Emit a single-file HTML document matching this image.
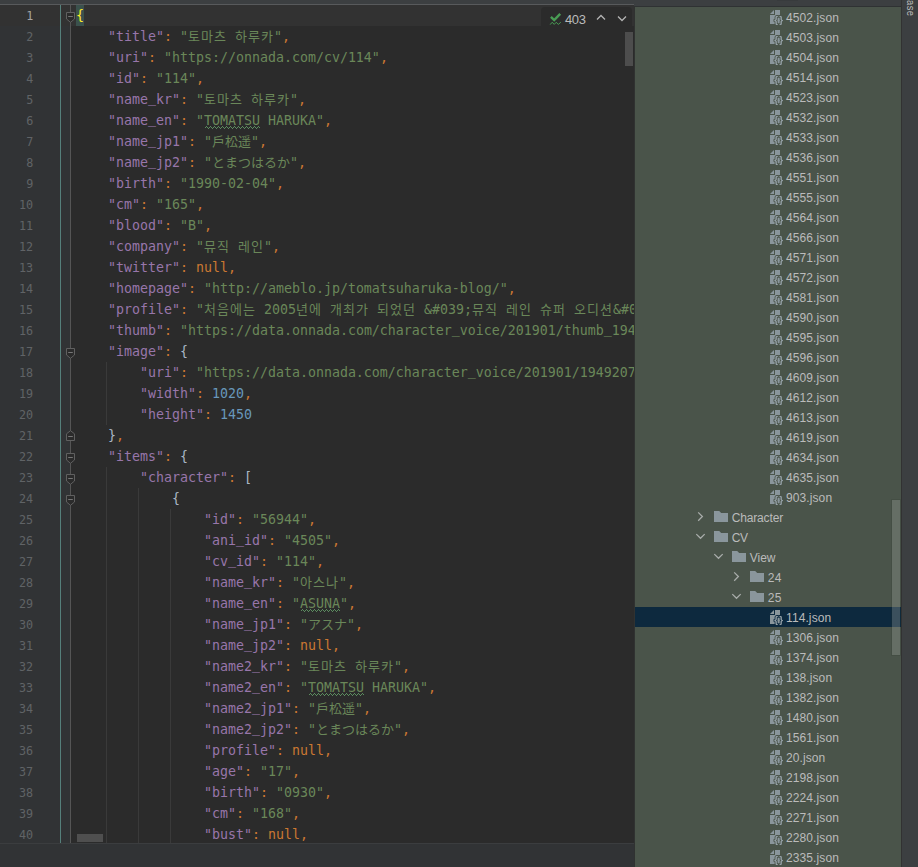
<!DOCTYPE html>
<html lang="ko">
<head>
<meta charset="utf-8">
<title>114.json</title>
<style>
html,body{margin:0;padding:0;}
body{width:918px;height:867px;overflow:hidden;background:#2b2b2b;position:relative;font-family:"Liberation Sans", "Noto Sans CJK KR", sans-serif;}
#app{position:absolute;left:0;top:0;width:918px;height:867px;overflow:hidden;background:#2b2b2b;}
.abs{position:absolute;}
#topstrip{left:0;top:0;width:634px;height:4px;background:#3c3f41;}
#topline{left:0;top:4px;width:634px;height:1px;background:#585a5c;}
#editor{left:0;top:5px;width:634px;height:838px;overflow:hidden;background:#2b2b2b;}
#gutter{left:0;top:0;width:70px;height:838px;background:#313335;}
#curline{left:0;top:0;width:634px;height:21px;background:#323232;}
#teal{left:60px;top:0;width:1px;height:838px;background:#55807b;}
#gsep{left:70px;top:0;width:1px;height:838px;background:#555555;}
#nums{left:0;top:0.8px;width:33.2px;transform:scaleX(0.955);transform-origin:100% 0;}
.no{height:21px;text-align:right;color:#606366;font:12.27px/21px "DejaVu Sans Mono", "Liberation Mono", "Noto Sans CJK KR", monospace;}
.no.cur{color:#a4a3a3;}
#code{left:76px;top:0;width:558px;overflow:hidden;}
.ln{height:21px;line-height:21px;white-space:pre;color:#a9b7c6;font:13.29px/21px "DejaVu Sans Mono", "Liberation Mono", "Noto Sans CJK KR", monospace;}
.k{color:#9876aa}.s{color:#6a8759}.c{color:#cc7832}.n{color:#6897bb}
.u{color:#6a8759;}
.us{position:relative;top:-2.5px;}
.wave{position:absolute;}
.b{color:#ffef28;background:#3b514d;display:inline-block;height:21px;}
.kr{font-family:"Liberation Mono","Noto Sans CJK KR","NanumGothic",sans-serif;font-size:13px;letter-spacing:1.04px;line-height:0;}
.jp{font-family:"Liberation Mono","Noto Sans CJK JP","IPAGothic",sans-serif;font-size:13px;line-height:0;}
.guide{position:absolute;width:1px;background:#3a3a3a;}
.fold{position:absolute;left:66px;}
#widget{left:541px;top:7px;width:91px;height:20px;background:#2b2b2b;border-radius:4px 4px 0 0;}
#w403{left:24px;top:5px;font:13px/16px "Liberation Sans", "Noto Sans CJK KR", sans-serif;color:#bbbbbb;letter-spacing:-0.4px;}
#vthumb{left:625px;top:32px;width:8px;height:34px;background:#4d4d4d;}
#hthumb{left:77px;top:834px;width:26px;height:8px;background:#4f4f4f;}
#botline{left:0;top:843px;width:634px;height:1px;background:#3b3d3f;}
#bot{left:0;top:844px;width:634px;height:23px;background:#313335;}
#edge{left:634px;top:5px;width:1px;height:862px;background:#303231;}
#rtop{left:634px;top:0;width:284px;height:6px;background:#3c3f41;}
#rline{left:635px;top:6px;width:266px;height:1px;background:#2f3233;}
#tree{left:635px;top:0;width:266px;height:867px;overflow:hidden;}
#treebg{left:0;top:7px;width:266px;height:860px;background:#4a544a;}
.row{position:absolute;left:0;width:266px;height:20px;}
.row.sel{background:#0d293e;}
.fi{position:absolute;display:block;line-height:0;}
.ico,.chev{display:block;}
.lbl{position:absolute;top:1px;height:20px;font:12px/20px "Liberation Sans", "Noto Sans CJK KR", sans-serif;color:#bbbbbb;white-space:pre;letter-spacing:0.1px;}
.br{font-family:"Liberation Sans",sans-serif;font-weight:bold;fill:#98a4ab;stroke:#4a544a;stroke-width:1.8px;paint-order:stroke;}
.ico{will-change:transform;}
.sel .br{stroke:#0d293e;}
#tthumb{left:257px;top:500px;width:8px;height:155px;background:rgba(166,172,166,0.30);box-shadow:0 0 0 1px rgba(40,48,40,0.16);}
#stripe{left:901px;top:0;width:17px;height:867px;background:#3c3f41;border-left:1px solid #323232;box-sizing:border-box;}
#vtext{left:15.7px;top:-27.2px;letter-spacing:0.5px;transform-origin:0 0;transform:rotate(90deg) scaleX(0.85);font:11px/14px "Liberation Sans", "Noto Sans CJK KR", sans-serif;color:#bbbbbb;white-space:pre;}
</style>
</head>
<body>
<div id="app">
<div id="topstrip" class="abs"></div>
<div id="topline" class="abs"></div>
<div id="editor" class="abs">
<div id="gutter" class="abs"></div>
<div id="curline" class="abs"></div>
<div id="teal" class="abs"></div>
<div id="gsep" class="abs"></div>
<div id="guides" class="abs" style="left:0;top:-5px">
<div class="guide" style="left:106px;top:362px;height:63px"></div>
<div class="guide" style="left:106px;top:467px;height:378px"></div>
<div class="guide" style="left:138px;top:488px;height:357px"></div>
<div class="guide" style="left:170px;top:509px;height:336px"></div>
</div>
<div id="nums" class="abs">
<div class="no cur">1</div>
<div class="no">2</div>
<div class="no">3</div>
<div class="no">4</div>
<div class="no">5</div>
<div class="no">6</div>
<div class="no">7</div>
<div class="no">8</div>
<div class="no">9</div>
<div class="no">10</div>
<div class="no">11</div>
<div class="no">12</div>
<div class="no">13</div>
<div class="no">14</div>
<div class="no">15</div>
<div class="no">16</div>
<div class="no">17</div>
<div class="no">18</div>
<div class="no">19</div>
<div class="no">20</div>
<div class="no">21</div>
<div class="no">22</div>
<div class="no">23</div>
<div class="no">24</div>
<div class="no">25</div>
<div class="no">26</div>
<div class="no">27</div>
<div class="no">28</div>
<div class="no">29</div>
<div class="no">30</div>
<div class="no">31</div>
<div class="no">32</div>
<div class="no">33</div>
<div class="no">34</div>
<div class="no">35</div>
<div class="no">36</div>
<div class="no">37</div>
<div class="no">38</div>
<div class="no">39</div>
<div class="no">40</div>
</div>
<div id="code" class="abs">
<div class="ln"><span class="b">{</span></div>
<div class="ln">    <span class="k">"title"</span><span class="c">:</span> <span class="s">"<span class="kr">토마츠</span> <span class="kr">하루카</span>"</span><span class="c">,</span></div>
<div class="ln">    <span class="k">"uri"</span><span class="c">:</span> <span class="s">"https://onnada.com/cv/114"</span><span class="c">,</span></div>
<div class="ln">    <span class="k">"id"</span><span class="c">:</span> <span class="s">"114"</span><span class="c">,</span></div>
<div class="ln">    <span class="k">"name<span class="us">_</span>kr"</span><span class="c">:</span> <span class="s">"<span class="kr">토마츠</span> <span class="kr">하루카</span>"</span><span class="c">,</span></div>
<div class="ln">    <span class="k">"name<span class="us">_</span>en"</span><span class="c">:</span> <span class="s">"</span><span class="u">TOMATSU</span><span class="s"> HARUKA"</span><span class="c">,</span></div>
<div class="ln">    <span class="k">"name<span class="us">_</span>jp1"</span><span class="c">:</span> <span class="s">"<span class="jp">戸松遥</span>"</span><span class="c">,</span></div>
<div class="ln">    <span class="k">"name<span class="us">_</span>jp2"</span><span class="c">:</span> <span class="s">"<span class="jp">とまつはるか</span>"</span><span class="c">,</span></div>
<div class="ln">    <span class="k">"birth"</span><span class="c">:</span> <span class="s">"1990-02-04"</span><span class="c">,</span></div>
<div class="ln">    <span class="k">"cm"</span><span class="c">:</span> <span class="s">"165"</span><span class="c">,</span></div>
<div class="ln">    <span class="k">"blood"</span><span class="c">:</span> <span class="s">"B"</span><span class="c">,</span></div>
<div class="ln">    <span class="k">"company"</span><span class="c">:</span> <span class="s">"<span class="kr">뮤직</span> <span class="kr">레인</span>"</span><span class="c">,</span></div>
<div class="ln">    <span class="k">"twitter"</span><span class="c">:</span> <span class="c">null</span><span class="c">,</span></div>
<div class="ln">    <span class="k">"homepage"</span><span class="c">:</span> <span class="s">"http://ameblo.jp/tomatsuharuka-blog/"</span><span class="c">,</span></div>
<div class="ln">    <span class="k">"profile"</span><span class="c">:</span> <span class="s">"<span class="kr">처음에는</span> 2005<span class="kr">년에</span> <span class="kr">개최가</span> <span class="kr">되었던</span> &amp;#039;<span class="kr">뮤직</span> <span class="kr">레인</span> <span class="kr">슈퍼</span> <span class="kr">오디션</span>&amp;#0</span></div>
<div class="ln">    <span class="k">"thumb"</span><span class="c">:</span> <span class="s">"https://data.onnada.com/character<span class="us">_</span>voice/201901/thumb<span class="us">_</span>194</span></div>
<div class="ln">    <span class="k">"image"</span><span class="c">:</span> {</div>
<div class="ln">        <span class="k">"uri"</span><span class="c">:</span> <span class="s">"https://data.onnada.com/character<span class="us">_</span>voice/201901/1949207</span></div>
<div class="ln">        <span class="k">"width"</span><span class="c">:</span> <span class="n">1020</span><span class="c">,</span></div>
<div class="ln">        <span class="k">"height"</span><span class="c">:</span> <span class="n">1450</span></div>
<div class="ln">    }<span class="c">,</span></div>
<div class="ln">    <span class="k">"items"</span><span class="c">:</span> {</div>
<div class="ln">        <span class="k">"character"</span><span class="c">:</span> [</div>
<div class="ln">            {</div>
<div class="ln">                <span class="k">"id"</span><span class="c">:</span> <span class="s">"56944"</span><span class="c">,</span></div>
<div class="ln">                <span class="k">"ani<span class="us">_</span>id"</span><span class="c">:</span> <span class="s">"4505"</span><span class="c">,</span></div>
<div class="ln">                <span class="k">"cv<span class="us">_</span>id"</span><span class="c">:</span> <span class="s">"114"</span><span class="c">,</span></div>
<div class="ln">                <span class="k">"name<span class="us">_</span>kr"</span><span class="c">:</span> <span class="s">"<span class="kr">아스나</span>"</span><span class="c">,</span></div>
<div class="ln">                <span class="k">"name<span class="us">_</span>en"</span><span class="c">:</span> <span class="s">"</span><span class="u">ASUNA</span><span class="s">"</span><span class="c">,</span></div>
<div class="ln">                <span class="k">"name<span class="us">_</span>jp1"</span><span class="c">:</span> <span class="s">"<span class="jp">アスナ</span>"</span><span class="c">,</span></div>
<div class="ln">                <span class="k">"name<span class="us">_</span>jp2"</span><span class="c">:</span> <span class="c">null</span><span class="c">,</span></div>
<div class="ln">                <span class="k">"name2<span class="us">_</span>kr"</span><span class="c">:</span> <span class="s">"<span class="kr">토마츠</span> <span class="kr">하루카</span>"</span><span class="c">,</span></div>
<div class="ln">                <span class="k">"name2<span class="us">_</span>en"</span><span class="c">:</span> <span class="s">"</span><span class="u">TOMATSU</span><span class="s"> HARUKA"</span><span class="c">,</span></div>
<div class="ln">                <span class="k">"name2<span class="us">_</span>jp1"</span><span class="c">:</span> <span class="s">"<span class="jp">戸松遥</span>"</span><span class="c">,</span></div>
<div class="ln">                <span class="k">"name2<span class="us">_</span>jp2"</span><span class="c">:</span> <span class="s">"<span class="jp">とまつはるか</span>"</span><span class="c">,</span></div>
<div class="ln">                <span class="k">"profile"</span><span class="c">:</span> <span class="c">null</span><span class="c">,</span></div>
<div class="ln">                <span class="k">"age"</span><span class="c">:</span> <span class="s">"17"</span><span class="c">,</span></div>
<div class="ln">                <span class="k">"birth"</span><span class="c">:</span> <span class="s">"0930"</span><span class="c">,</span></div>
<div class="ln">                <span class="k">"cm"</span><span class="c">:</span> <span class="s">"168"</span><span class="c">,</span></div>
<div class="ln">                <span class="k">"bust"</span><span class="c">:</span> <span class="c">null</span><span class="c">,</span></div>
</div>
<div id="waves" class="abs" style="left:0;top:-5px">
<svg class="wave" style="left:204px;top:126px" width="56" height="3" viewBox="0 0 56 3"><path d="M0.5 2.5L2.5 0.5L4.5 2.5L6.5 0.5L8.5 2.5L10.5 0.5L12.5 2.5L14.5 0.5L16.5 2.5L18.5 0.5L20.5 2.5L22.5 0.5L24.5 2.5L26.5 0.5L28.5 2.5L30.5 0.5L32.5 2.5L34.5 0.5L36.5 2.5L38.5 0.5L40.5 2.5L42.5 0.5L44.5 2.5L46.5 0.5L48.5 2.5L50.5 0.5L52.5 2.5L54.5 0.5L56.5 2.5" fill="none" stroke="#5b8c5f" stroke-width="1" shape-rendering="crispEdges"/></svg>
<svg class="wave" style="left:300px;top:609px" width="40" height="3" viewBox="0 0 40 3"><path d="M0.5 2.5L2.5 0.5L4.5 2.5L6.5 0.5L8.5 2.5L10.5 0.5L12.5 2.5L14.5 0.5L16.5 2.5L18.5 0.5L20.5 2.5L22.5 0.5L24.5 2.5L26.5 0.5L28.5 2.5L30.5 0.5L32.5 2.5L34.5 0.5L36.5 2.5L38.5 0.5L40.5 2.5" fill="none" stroke="#5b8c5f" stroke-width="1" shape-rendering="crispEdges"/></svg>
<svg class="wave" style="left:308px;top:693px" width="56" height="3" viewBox="0 0 56 3"><path d="M0.5 2.5L2.5 0.5L4.5 2.5L6.5 0.5L8.5 2.5L10.5 0.5L12.5 2.5L14.5 0.5L16.5 2.5L18.5 0.5L20.5 2.5L22.5 0.5L24.5 2.5L26.5 0.5L28.5 2.5L30.5 0.5L32.5 2.5L34.5 0.5L36.5 2.5L38.5 0.5L40.5 2.5L42.5 0.5L44.5 2.5L46.5 0.5L48.5 2.5L50.5 0.5L52.5 2.5L54.5 0.5L56.5 2.5" fill="none" stroke="#5b8c5f" stroke-width="1" shape-rendering="crispEdges"/></svg>
</div>
<div id="folds" class="abs" style="left:0;top:-5px">
<svg class="fold" style="top:12px" width="9" height="11" viewBox="0 0 9 11"><path d="M0.5 0.5H8.5V7L4.5 10.3L0.5 7Z" fill="#2b2b2b" stroke="#606060"/><path d="M2.2 4.5H6.8" stroke="#767676" stroke-width="1"/></svg>
<svg class="fold" style="top:348px" width="9" height="11" viewBox="0 0 9 11"><path d="M0.5 0.5H8.5V7L4.5 10.3L0.5 7Z" fill="#2b2b2b" stroke="#606060"/><path d="M2.2 4.5H6.8" stroke="#767676" stroke-width="1"/></svg>
<svg class="fold" style="top:430px" width="9" height="11" viewBox="0 0 9 11"><path d="M4.5 0.7L8.5 3.8V10.5H0.5V3.8Z" fill="#2b2b2b" stroke="#606060"/><path d="M2.2 6.5H6.8" stroke="#767676" stroke-width="1"/></svg>
<svg class="fold" style="top:453px" width="9" height="11" viewBox="0 0 9 11"><path d="M0.5 0.5H8.5V7L4.5 10.3L0.5 7Z" fill="#2b2b2b" stroke="#606060"/><path d="M2.2 4.5H6.8" stroke="#767676" stroke-width="1"/></svg>
<svg class="fold" style="top:474px" width="9" height="11" viewBox="0 0 9 11"><path d="M0.5 0.5H8.5V7L4.5 10.3L0.5 7Z" fill="#2b2b2b" stroke="#606060"/><path d="M2.2 4.5H6.8" stroke="#767676" stroke-width="1"/></svg>
<svg class="fold" style="top:495px" width="9" height="11" viewBox="0 0 9 11"><path d="M0.5 0.5H8.5V7L4.5 10.3L0.5 7Z" fill="#2b2b2b" stroke="#606060"/><path d="M2.2 4.5H6.8" stroke="#767676" stroke-width="1"/></svg>
</div>
</div>
<div id="widget" class="abs">
<svg class="abs" style="left:8px;top:5px" width="14" height="14" viewBox="0 0 14 14"><path d="M1.9 4.9L5.2 8.1L11.2 1.9" fill="none" stroke="#499c54" stroke-width="2.4"/><path d="M1.2 12.6L3.1 10.3L5.3 12.4L7.2 10.3L9.3 12.4L11.8 10.3" fill="none" stroke="#499c54" stroke-width="1"/></svg>
<div id="w403" class="abs">403</div>
<svg class="abs" style="left:55px;top:7px" width="10" height="7" viewBox="0 0 10 7"><path d="M1 5.5L5 1.5L9 5.5" fill="none" stroke="#b4b4b4" stroke-width="1.3"/></svg>
<svg class="abs" style="left:76px;top:8px" width="10" height="7" viewBox="0 0 10 7"><path d="M1 1.5L5 5.5L9 1.5" fill="none" stroke="#b4b4b4" stroke-width="1.3"/></svg>
</div>
<div id="vthumb" class="abs"></div>
<div id="hthumb" class="abs"></div>
<div id="botline" class="abs"></div>
<div id="bot" class="abs"></div>
<div id="edge" class="abs"></div>
<div id="rtop" class="abs"></div>
<div id="rline" class="abs"></div>
<div class="abs" style="left:777px;top:0;width:21px;height:1px;background:#383b3d"></div>
<div id="tree" class="abs">
<div id="treebg" class="abs"></div>
<div class="row" style="top:7px"><span class="fi" style="left:132px;top:2px"><svg class="ico" width="18" height="18" viewBox="0 0 18 18"><path d="M7 1L3 5H7Z" fill="#8a969c"/><path d="M8 1V6H3V15H13V1Z" fill="#8a969c"/><text class="br" x="9.1" y="14.4" font-size="9.8" text-anchor="middle">{</text><text class="br" x="14.1" y="14.4" font-size="9.8" text-anchor="middle">}</text></svg></span><span class="lbl" style="left:151px">4502.json</span></div>
<div class="row" style="top:27px"><span class="fi" style="left:132px;top:2px"><svg class="ico" width="18" height="18" viewBox="0 0 18 18"><path d="M7 1L3 5H7Z" fill="#8a969c"/><path d="M8 1V6H3V15H13V1Z" fill="#8a969c"/><text class="br" x="9.1" y="14.4" font-size="9.8" text-anchor="middle">{</text><text class="br" x="14.1" y="14.4" font-size="9.8" text-anchor="middle">}</text></svg></span><span class="lbl" style="left:151px">4503.json</span></div>
<div class="row" style="top:47px"><span class="fi" style="left:132px;top:2px"><svg class="ico" width="18" height="18" viewBox="0 0 18 18"><path d="M7 1L3 5H7Z" fill="#8a969c"/><path d="M8 1V6H3V15H13V1Z" fill="#8a969c"/><text class="br" x="9.1" y="14.4" font-size="9.8" text-anchor="middle">{</text><text class="br" x="14.1" y="14.4" font-size="9.8" text-anchor="middle">}</text></svg></span><span class="lbl" style="left:151px">4504.json</span></div>
<div class="row" style="top:67px"><span class="fi" style="left:132px;top:2px"><svg class="ico" width="18" height="18" viewBox="0 0 18 18"><path d="M7 1L3 5H7Z" fill="#8a969c"/><path d="M8 1V6H3V15H13V1Z" fill="#8a969c"/><text class="br" x="9.1" y="14.4" font-size="9.8" text-anchor="middle">{</text><text class="br" x="14.1" y="14.4" font-size="9.8" text-anchor="middle">}</text></svg></span><span class="lbl" style="left:151px">4514.json</span></div>
<div class="row" style="top:87px"><span class="fi" style="left:132px;top:2px"><svg class="ico" width="18" height="18" viewBox="0 0 18 18"><path d="M7 1L3 5H7Z" fill="#8a969c"/><path d="M8 1V6H3V15H13V1Z" fill="#8a969c"/><text class="br" x="9.1" y="14.4" font-size="9.8" text-anchor="middle">{</text><text class="br" x="14.1" y="14.4" font-size="9.8" text-anchor="middle">}</text></svg></span><span class="lbl" style="left:151px">4523.json</span></div>
<div class="row" style="top:107px"><span class="fi" style="left:132px;top:2px"><svg class="ico" width="18" height="18" viewBox="0 0 18 18"><path d="M7 1L3 5H7Z" fill="#8a969c"/><path d="M8 1V6H3V15H13V1Z" fill="#8a969c"/><text class="br" x="9.1" y="14.4" font-size="9.8" text-anchor="middle">{</text><text class="br" x="14.1" y="14.4" font-size="9.8" text-anchor="middle">}</text></svg></span><span class="lbl" style="left:151px">4532.json</span></div>
<div class="row" style="top:127px"><span class="fi" style="left:132px;top:2px"><svg class="ico" width="18" height="18" viewBox="0 0 18 18"><path d="M7 1L3 5H7Z" fill="#8a969c"/><path d="M8 1V6H3V15H13V1Z" fill="#8a969c"/><text class="br" x="9.1" y="14.4" font-size="9.8" text-anchor="middle">{</text><text class="br" x="14.1" y="14.4" font-size="9.8" text-anchor="middle">}</text></svg></span><span class="lbl" style="left:151px">4533.json</span></div>
<div class="row" style="top:147px"><span class="fi" style="left:132px;top:2px"><svg class="ico" width="18" height="18" viewBox="0 0 18 18"><path d="M7 1L3 5H7Z" fill="#8a969c"/><path d="M8 1V6H3V15H13V1Z" fill="#8a969c"/><text class="br" x="9.1" y="14.4" font-size="9.8" text-anchor="middle">{</text><text class="br" x="14.1" y="14.4" font-size="9.8" text-anchor="middle">}</text></svg></span><span class="lbl" style="left:151px">4536.json</span></div>
<div class="row" style="top:167px"><span class="fi" style="left:132px;top:2px"><svg class="ico" width="18" height="18" viewBox="0 0 18 18"><path d="M7 1L3 5H7Z" fill="#8a969c"/><path d="M8 1V6H3V15H13V1Z" fill="#8a969c"/><text class="br" x="9.1" y="14.4" font-size="9.8" text-anchor="middle">{</text><text class="br" x="14.1" y="14.4" font-size="9.8" text-anchor="middle">}</text></svg></span><span class="lbl" style="left:151px">4551.json</span></div>
<div class="row" style="top:187px"><span class="fi" style="left:132px;top:2px"><svg class="ico" width="18" height="18" viewBox="0 0 18 18"><path d="M7 1L3 5H7Z" fill="#8a969c"/><path d="M8 1V6H3V15H13V1Z" fill="#8a969c"/><text class="br" x="9.1" y="14.4" font-size="9.8" text-anchor="middle">{</text><text class="br" x="14.1" y="14.4" font-size="9.8" text-anchor="middle">}</text></svg></span><span class="lbl" style="left:151px">4555.json</span></div>
<div class="row" style="top:207px"><span class="fi" style="left:132px;top:2px"><svg class="ico" width="18" height="18" viewBox="0 0 18 18"><path d="M7 1L3 5H7Z" fill="#8a969c"/><path d="M8 1V6H3V15H13V1Z" fill="#8a969c"/><text class="br" x="9.1" y="14.4" font-size="9.8" text-anchor="middle">{</text><text class="br" x="14.1" y="14.4" font-size="9.8" text-anchor="middle">}</text></svg></span><span class="lbl" style="left:151px">4564.json</span></div>
<div class="row" style="top:227px"><span class="fi" style="left:132px;top:2px"><svg class="ico" width="18" height="18" viewBox="0 0 18 18"><path d="M7 1L3 5H7Z" fill="#8a969c"/><path d="M8 1V6H3V15H13V1Z" fill="#8a969c"/><text class="br" x="9.1" y="14.4" font-size="9.8" text-anchor="middle">{</text><text class="br" x="14.1" y="14.4" font-size="9.8" text-anchor="middle">}</text></svg></span><span class="lbl" style="left:151px">4566.json</span></div>
<div class="row" style="top:247px"><span class="fi" style="left:132px;top:2px"><svg class="ico" width="18" height="18" viewBox="0 0 18 18"><path d="M7 1L3 5H7Z" fill="#8a969c"/><path d="M8 1V6H3V15H13V1Z" fill="#8a969c"/><text class="br" x="9.1" y="14.4" font-size="9.8" text-anchor="middle">{</text><text class="br" x="14.1" y="14.4" font-size="9.8" text-anchor="middle">}</text></svg></span><span class="lbl" style="left:151px">4571.json</span></div>
<div class="row" style="top:267px"><span class="fi" style="left:132px;top:2px"><svg class="ico" width="18" height="18" viewBox="0 0 18 18"><path d="M7 1L3 5H7Z" fill="#8a969c"/><path d="M8 1V6H3V15H13V1Z" fill="#8a969c"/><text class="br" x="9.1" y="14.4" font-size="9.8" text-anchor="middle">{</text><text class="br" x="14.1" y="14.4" font-size="9.8" text-anchor="middle">}</text></svg></span><span class="lbl" style="left:151px">4572.json</span></div>
<div class="row" style="top:287px"><span class="fi" style="left:132px;top:2px"><svg class="ico" width="18" height="18" viewBox="0 0 18 18"><path d="M7 1L3 5H7Z" fill="#8a969c"/><path d="M8 1V6H3V15H13V1Z" fill="#8a969c"/><text class="br" x="9.1" y="14.4" font-size="9.8" text-anchor="middle">{</text><text class="br" x="14.1" y="14.4" font-size="9.8" text-anchor="middle">}</text></svg></span><span class="lbl" style="left:151px">4581.json</span></div>
<div class="row" style="top:307px"><span class="fi" style="left:132px;top:2px"><svg class="ico" width="18" height="18" viewBox="0 0 18 18"><path d="M7 1L3 5H7Z" fill="#8a969c"/><path d="M8 1V6H3V15H13V1Z" fill="#8a969c"/><text class="br" x="9.1" y="14.4" font-size="9.8" text-anchor="middle">{</text><text class="br" x="14.1" y="14.4" font-size="9.8" text-anchor="middle">}</text></svg></span><span class="lbl" style="left:151px">4590.json</span></div>
<div class="row" style="top:327px"><span class="fi" style="left:132px;top:2px"><svg class="ico" width="18" height="18" viewBox="0 0 18 18"><path d="M7 1L3 5H7Z" fill="#8a969c"/><path d="M8 1V6H3V15H13V1Z" fill="#8a969c"/><text class="br" x="9.1" y="14.4" font-size="9.8" text-anchor="middle">{</text><text class="br" x="14.1" y="14.4" font-size="9.8" text-anchor="middle">}</text></svg></span><span class="lbl" style="left:151px">4595.json</span></div>
<div class="row" style="top:347px"><span class="fi" style="left:132px;top:2px"><svg class="ico" width="18" height="18" viewBox="0 0 18 18"><path d="M7 1L3 5H7Z" fill="#8a969c"/><path d="M8 1V6H3V15H13V1Z" fill="#8a969c"/><text class="br" x="9.1" y="14.4" font-size="9.8" text-anchor="middle">{</text><text class="br" x="14.1" y="14.4" font-size="9.8" text-anchor="middle">}</text></svg></span><span class="lbl" style="left:151px">4596.json</span></div>
<div class="row" style="top:367px"><span class="fi" style="left:132px;top:2px"><svg class="ico" width="18" height="18" viewBox="0 0 18 18"><path d="M7 1L3 5H7Z" fill="#8a969c"/><path d="M8 1V6H3V15H13V1Z" fill="#8a969c"/><text class="br" x="9.1" y="14.4" font-size="9.8" text-anchor="middle">{</text><text class="br" x="14.1" y="14.4" font-size="9.8" text-anchor="middle">}</text></svg></span><span class="lbl" style="left:151px">4609.json</span></div>
<div class="row" style="top:387px"><span class="fi" style="left:132px;top:2px"><svg class="ico" width="18" height="18" viewBox="0 0 18 18"><path d="M7 1L3 5H7Z" fill="#8a969c"/><path d="M8 1V6H3V15H13V1Z" fill="#8a969c"/><text class="br" x="9.1" y="14.4" font-size="9.8" text-anchor="middle">{</text><text class="br" x="14.1" y="14.4" font-size="9.8" text-anchor="middle">}</text></svg></span><span class="lbl" style="left:151px">4612.json</span></div>
<div class="row" style="top:407px"><span class="fi" style="left:132px;top:2px"><svg class="ico" width="18" height="18" viewBox="0 0 18 18"><path d="M7 1L3 5H7Z" fill="#8a969c"/><path d="M8 1V6H3V15H13V1Z" fill="#8a969c"/><text class="br" x="9.1" y="14.4" font-size="9.8" text-anchor="middle">{</text><text class="br" x="14.1" y="14.4" font-size="9.8" text-anchor="middle">}</text></svg></span><span class="lbl" style="left:151px">4613.json</span></div>
<div class="row" style="top:427px"><span class="fi" style="left:132px;top:2px"><svg class="ico" width="18" height="18" viewBox="0 0 18 18"><path d="M7 1L3 5H7Z" fill="#8a969c"/><path d="M8 1V6H3V15H13V1Z" fill="#8a969c"/><text class="br" x="9.1" y="14.4" font-size="9.8" text-anchor="middle">{</text><text class="br" x="14.1" y="14.4" font-size="9.8" text-anchor="middle">}</text></svg></span><span class="lbl" style="left:151px">4619.json</span></div>
<div class="row" style="top:447px"><span class="fi" style="left:132px;top:2px"><svg class="ico" width="18" height="18" viewBox="0 0 18 18"><path d="M7 1L3 5H7Z" fill="#8a969c"/><path d="M8 1V6H3V15H13V1Z" fill="#8a969c"/><text class="br" x="9.1" y="14.4" font-size="9.8" text-anchor="middle">{</text><text class="br" x="14.1" y="14.4" font-size="9.8" text-anchor="middle">}</text></svg></span><span class="lbl" style="left:151px">4634.json</span></div>
<div class="row" style="top:467px"><span class="fi" style="left:132px;top:2px"><svg class="ico" width="18" height="18" viewBox="0 0 18 18"><path d="M7 1L3 5H7Z" fill="#8a969c"/><path d="M8 1V6H3V15H13V1Z" fill="#8a969c"/><text class="br" x="9.1" y="14.4" font-size="9.8" text-anchor="middle">{</text><text class="br" x="14.1" y="14.4" font-size="9.8" text-anchor="middle">}</text></svg></span><span class="lbl" style="left:151px">4635.json</span></div>
<div class="row" style="top:487px"><span class="fi" style="left:132px;top:2px"><svg class="ico" width="18" height="18" viewBox="0 0 18 18"><path d="M7 1L3 5H7Z" fill="#8a969c"/><path d="M8 1V6H3V15H13V1Z" fill="#8a969c"/><text class="br" x="9.1" y="14.4" font-size="9.8" text-anchor="middle">{</text><text class="br" x="14.1" y="14.4" font-size="9.8" text-anchor="middle">}</text></svg></span><span class="lbl" style="left:151px">903.json</span></div>
<div class="row" style="top:507px"><span class="fi" style="left:57px;top:1px"><svg class="chev" width="16" height="16" viewBox="0 0 16 16"><path d="M6.2 4.35L10.4 8.55L6.2 12.75" fill="none" stroke="#a9adab" stroke-width="1.25"/></svg></span><span class="fi" style="left:78px;top:2px"><svg class="ico" width="16" height="16" viewBox="0 0 16 16"><path d="M1 2H6.2L8.2 4H15V13H1Z" fill="#8a969c"/></svg></span><span class="lbl" style="left:96.7px;letter-spacing:-0.15px">Character</span></div>
<div class="row" style="top:527px"><span class="fi" style="left:57px;top:1px"><svg class="chev" width="16" height="16" viewBox="0 0 16 16"><path d="M4.3 6.1L8.5 10.3L12.7 6.1" fill="none" stroke="#a9adab" stroke-width="1.25"/></svg></span><span class="fi" style="left:78px;top:2px"><svg class="ico" width="16" height="16" viewBox="0 0 16 16"><path d="M1 2H6.2L8.2 4H15V13H1Z" fill="#8a969c"/></svg></span><span class="lbl" style="left:96.7px;letter-spacing:-0.4px">CV</span></div>
<div class="row" style="top:547px"><span class="fi" style="left:75px;top:1px"><svg class="chev" width="16" height="16" viewBox="0 0 16 16"><path d="M4.3 6.1L8.5 10.3L12.7 6.1" fill="none" stroke="#a9adab" stroke-width="1.25"/></svg></span><span class="fi" style="left:96px;top:2px"><svg class="ico" width="16" height="16" viewBox="0 0 16 16"><path d="M1 2H6.2L8.2 4H15V13H1Z" fill="#8a969c"/></svg></span><span class="lbl" style="left:114.7px;letter-spacing:0px">View</span></div>
<div class="row" style="top:567px"><span class="fi" style="left:93px;top:1px"><svg class="chev" width="16" height="16" viewBox="0 0 16 16"><path d="M6.2 4.35L10.4 8.55L6.2 12.75" fill="none" stroke="#a9adab" stroke-width="1.25"/></svg></span><span class="fi" style="left:114px;top:2px"><svg class="ico" width="16" height="16" viewBox="0 0 16 16"><path d="M1 2H6.2L8.2 4H15V13H1Z" fill="#8a969c"/></svg></span><span class="lbl" style="left:132.7px;letter-spacing:0.45px">24</span></div>
<div class="row" style="top:587px"><span class="fi" style="left:93px;top:1px"><svg class="chev" width="16" height="16" viewBox="0 0 16 16"><path d="M4.3 6.1L8.5 10.3L12.7 6.1" fill="none" stroke="#a9adab" stroke-width="1.25"/></svg></span><span class="fi" style="left:114px;top:2px"><svg class="ico" width="16" height="16" viewBox="0 0 16 16"><path d="M1 2H6.2L8.2 4H15V13H1Z" fill="#8a969c"/></svg></span><span class="lbl" style="left:132.7px;letter-spacing:0.45px">25</span></div>
<div class="row sel" style="top:607px"><span class="fi" style="left:132px;top:2px"><svg class="ico" width="18" height="18" viewBox="0 0 18 18"><path d="M7 1L3 5H7Z" fill="#8a969c"/><path d="M8 1V6H3V15H13V1Z" fill="#8a969c"/><text class="br" x="9.1" y="14.4" font-size="9.8" text-anchor="middle">{</text><text class="br" x="14.1" y="14.4" font-size="9.8" text-anchor="middle">}</text></svg></span><span class="lbl" style="left:151px">114.json</span></div>
<div class="row" style="top:627px"><span class="fi" style="left:132px;top:2px"><svg class="ico" width="18" height="18" viewBox="0 0 18 18"><path d="M7 1L3 5H7Z" fill="#8a969c"/><path d="M8 1V6H3V15H13V1Z" fill="#8a969c"/><text class="br" x="9.1" y="14.4" font-size="9.8" text-anchor="middle">{</text><text class="br" x="14.1" y="14.4" font-size="9.8" text-anchor="middle">}</text></svg></span><span class="lbl" style="left:151px">1306.json</span></div>
<div class="row" style="top:647px"><span class="fi" style="left:132px;top:2px"><svg class="ico" width="18" height="18" viewBox="0 0 18 18"><path d="M7 1L3 5H7Z" fill="#8a969c"/><path d="M8 1V6H3V15H13V1Z" fill="#8a969c"/><text class="br" x="9.1" y="14.4" font-size="9.8" text-anchor="middle">{</text><text class="br" x="14.1" y="14.4" font-size="9.8" text-anchor="middle">}</text></svg></span><span class="lbl" style="left:151px">1374.json</span></div>
<div class="row" style="top:667px"><span class="fi" style="left:132px;top:2px"><svg class="ico" width="18" height="18" viewBox="0 0 18 18"><path d="M7 1L3 5H7Z" fill="#8a969c"/><path d="M8 1V6H3V15H13V1Z" fill="#8a969c"/><text class="br" x="9.1" y="14.4" font-size="9.8" text-anchor="middle">{</text><text class="br" x="14.1" y="14.4" font-size="9.8" text-anchor="middle">}</text></svg></span><span class="lbl" style="left:151px">138.json</span></div>
<div class="row" style="top:687px"><span class="fi" style="left:132px;top:2px"><svg class="ico" width="18" height="18" viewBox="0 0 18 18"><path d="M7 1L3 5H7Z" fill="#8a969c"/><path d="M8 1V6H3V15H13V1Z" fill="#8a969c"/><text class="br" x="9.1" y="14.4" font-size="9.8" text-anchor="middle">{</text><text class="br" x="14.1" y="14.4" font-size="9.8" text-anchor="middle">}</text></svg></span><span class="lbl" style="left:151px">1382.json</span></div>
<div class="row" style="top:707px"><span class="fi" style="left:132px;top:2px"><svg class="ico" width="18" height="18" viewBox="0 0 18 18"><path d="M7 1L3 5H7Z" fill="#8a969c"/><path d="M8 1V6H3V15H13V1Z" fill="#8a969c"/><text class="br" x="9.1" y="14.4" font-size="9.8" text-anchor="middle">{</text><text class="br" x="14.1" y="14.4" font-size="9.8" text-anchor="middle">}</text></svg></span><span class="lbl" style="left:151px">1480.json</span></div>
<div class="row" style="top:727px"><span class="fi" style="left:132px;top:2px"><svg class="ico" width="18" height="18" viewBox="0 0 18 18"><path d="M7 1L3 5H7Z" fill="#8a969c"/><path d="M8 1V6H3V15H13V1Z" fill="#8a969c"/><text class="br" x="9.1" y="14.4" font-size="9.8" text-anchor="middle">{</text><text class="br" x="14.1" y="14.4" font-size="9.8" text-anchor="middle">}</text></svg></span><span class="lbl" style="left:151px">1561.json</span></div>
<div class="row" style="top:747px"><span class="fi" style="left:132px;top:2px"><svg class="ico" width="18" height="18" viewBox="0 0 18 18"><path d="M7 1L3 5H7Z" fill="#8a969c"/><path d="M8 1V6H3V15H13V1Z" fill="#8a969c"/><text class="br" x="9.1" y="14.4" font-size="9.8" text-anchor="middle">{</text><text class="br" x="14.1" y="14.4" font-size="9.8" text-anchor="middle">}</text></svg></span><span class="lbl" style="left:151px">20.json</span></div>
<div class="row" style="top:767px"><span class="fi" style="left:132px;top:2px"><svg class="ico" width="18" height="18" viewBox="0 0 18 18"><path d="M7 1L3 5H7Z" fill="#8a969c"/><path d="M8 1V6H3V15H13V1Z" fill="#8a969c"/><text class="br" x="9.1" y="14.4" font-size="9.8" text-anchor="middle">{</text><text class="br" x="14.1" y="14.4" font-size="9.8" text-anchor="middle">}</text></svg></span><span class="lbl" style="left:151px">2198.json</span></div>
<div class="row" style="top:787px"><span class="fi" style="left:132px;top:2px"><svg class="ico" width="18" height="18" viewBox="0 0 18 18"><path d="M7 1L3 5H7Z" fill="#8a969c"/><path d="M8 1V6H3V15H13V1Z" fill="#8a969c"/><text class="br" x="9.1" y="14.4" font-size="9.8" text-anchor="middle">{</text><text class="br" x="14.1" y="14.4" font-size="9.8" text-anchor="middle">}</text></svg></span><span class="lbl" style="left:151px">2224.json</span></div>
<div class="row" style="top:807px"><span class="fi" style="left:132px;top:2px"><svg class="ico" width="18" height="18" viewBox="0 0 18 18"><path d="M7 1L3 5H7Z" fill="#8a969c"/><path d="M8 1V6H3V15H13V1Z" fill="#8a969c"/><text class="br" x="9.1" y="14.4" font-size="9.8" text-anchor="middle">{</text><text class="br" x="14.1" y="14.4" font-size="9.8" text-anchor="middle">}</text></svg></span><span class="lbl" style="left:151px">2271.json</span></div>
<div class="row" style="top:827px"><span class="fi" style="left:132px;top:2px"><svg class="ico" width="18" height="18" viewBox="0 0 18 18"><path d="M7 1L3 5H7Z" fill="#8a969c"/><path d="M8 1V6H3V15H13V1Z" fill="#8a969c"/><text class="br" x="9.1" y="14.4" font-size="9.8" text-anchor="middle">{</text><text class="br" x="14.1" y="14.4" font-size="9.8" text-anchor="middle">}</text></svg></span><span class="lbl" style="left:151px">2280.json</span></div>
<div class="row" style="top:847px"><span class="fi" style="left:132px;top:2px"><svg class="ico" width="18" height="18" viewBox="0 0 18 18"><path d="M7 1L3 5H7Z" fill="#8a969c"/><path d="M8 1V6H3V15H13V1Z" fill="#8a969c"/><text class="br" x="9.1" y="14.4" font-size="9.8" text-anchor="middle">{</text><text class="br" x="14.1" y="14.4" font-size="9.8" text-anchor="middle">}</text></svg></span><span class="lbl" style="left:151px">2335.json</span></div>
<div id="tthumb" class="abs"></div>
</div>
<div id="stripe" class="abs"><div id="vtext" class="abs">Database</div></div>
</div>
</body>
</html>
